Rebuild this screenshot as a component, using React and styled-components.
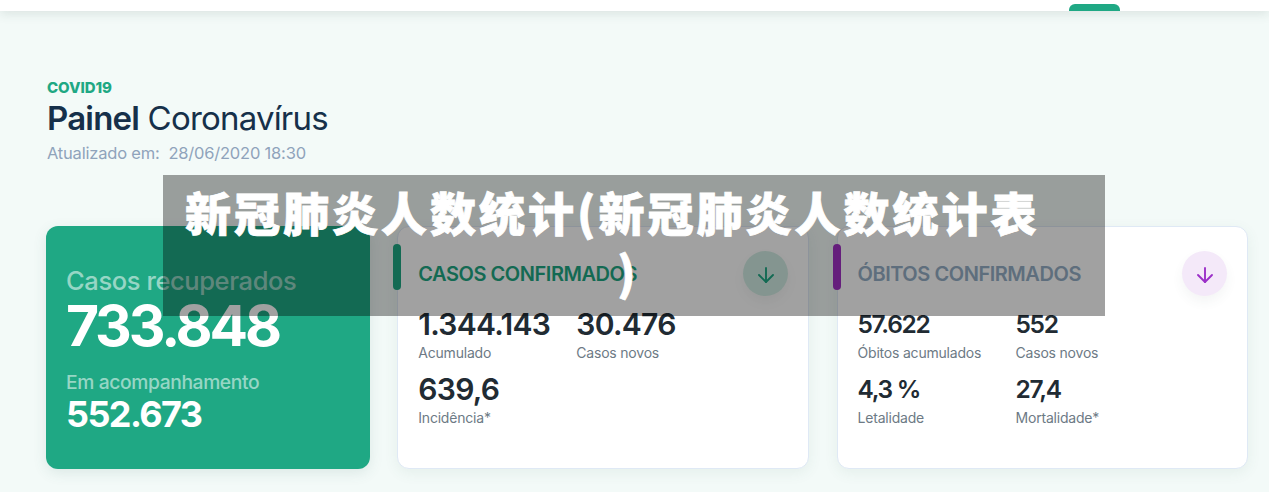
import React from "react";
import styled, { createGlobalStyle } from "styled-components";
import { ArrowDown } from "lucide-react";

const GlobalStyle = createGlobalStyle`
  html, body {
    margin: 0;
    padding: 0;
    height: 100%;
    overflow: hidden;
    background: #f3faf8;
    font-family: Inter, "Liberation Sans", sans-serif;
  }
  * { box-sizing: border-box; }
`;

const Page = styled.div`
  position: relative;
  width: 1269px;
  height: 492px;
  overflow: hidden;
`;

const TopBar = styled.header`
  height: 11px;
  background: #fff;
  display: flex;
  justify-content: flex-end;
  align-items: flex-end;
  padding-right: 149px;
  box-shadow: 0 2px 12px rgba(60, 90, 80, 0.16);
`;

const ActiveTab = styled.div`
  width: 51px;
  height: 7px;
  background: #1fa884;
  border-radius: 6px 6px 0 0;
`;

const Main = styled.main`
  padding: 69px 21px 0 46px;
`;

const Eyebrow = styled.div`
  font-size: 15px;
  line-height: 16px;
  font-weight: 800;
  color: #1fa884;
  padding-left: 1px;
  letter-spacing: -0.05px;
`;

const Heading = styled.h1`
  margin: 2px 0 0 1px;
  font-size: 33px;
  line-height: 40px;
  font-weight: 400;
  color: #16304a;
  letter-spacing: -0.8px;

  b {
    font-weight: 600;
  }
`;

const Updated = styled.div`
  margin: 4px 0 0 1px;
  font-size: 16.5px;
  line-height: 22px;
  color: #8fa3bb;
  letter-spacing: -0.2px;
`;

const Cards = styled.section`
  display: grid;
  grid-template-columns: 324px 412px 411.5px;
  gap: 27.25px;
  height: 243px;
  margin-top: 62px;
`;

const GreenCard = styled.article`
  background: #1fa884;
  border-radius: 12px;
  padding: 39px 20px 0;
  color: #fff;
  box-shadow: 0 4px 14px rgba(60, 110, 95, 0.12);
`;

const GreenLabel = styled.div`
  font-size: ${(p) => p.$size}px;
  line-height: ${(p) => p.$line}px;
  margin-top: ${(p) => p.$gap || 0}px;
  color: rgba(255, 255, 255, 0.55);
  font-weight: 500;
  letter-spacing: -0.4px;
`;

const GreenValue = styled.div`
  font-size: ${(p) => p.$size}px;
  line-height: ${(p) => p.$line}px;
  font-weight: 700;
  letter-spacing: ${(p) => p.$spacing}px;
`;

const Card = styled.article`
  position: relative;
  background: #fff;
  border: 1px solid #dfe9f5;
  border-radius: 12px;
  padding: 24px 20px 0;
  box-shadow: 0 4px 14px rgba(60, 110, 95, 0.08);
`;

const Accent = styled.span`
  position: absolute;
  left: -5px;
  top: 17px;
  width: 8px;
  height: 46px;
  border-radius: 4px;
  background: ${(p) => p.$color};
`;

const CardHead = styled.div`
  display: flex;
  justify-content: space-between;
  align-items: center;
  height: 45px;
`;

const CardTitle = styled.h2`
  margin: 0;
  font-size: 20px;
  font-weight: 600;
  letter-spacing: -0.45px;
  color: ${(p) => p.$color};
`;

const RoundButton = styled.button`
  width: 45px;
  height: 45px;
  border: 0;
  padding: 2px 0 0;
  border-radius: 50%;
  display: flex;
  align-items: center;
  justify-content: center;
  background: ${(p) => p.$bg};
  color: ${(p) => p.$color};
  box-shadow: 0 6px 12px rgba(60, 90, 80, 0.06);
`;

const Stats = styled.div`
  display: grid;
  grid-template-columns: 158px 1fr;
  row-gap: 7px;
  margin-top: 10px;
`;

const Value = styled.div`
  font-size: ${(p) => p.$size}px;
  line-height: 36px;
  font-weight: 600;
  color: #212b33;
  letter-spacing: ${(p) => p.$spacing}px;
`;

const Label = styled.div`
  font-size: 14px;
  line-height: 22px;
  color: #6d7a85;
  letter-spacing: -0.2px;
`;

const Banner = styled.div`
  position: absolute;
  left: 163px;
  top: 175px;
  width: 942px;
  height: 141px;
  padding: 6px 22px 0;
  background: rgba(0, 0, 0, 0.37);
  color: #fff;
  font-family: "Noto Sans CJK SC", sans-serif;
  font-size: 46px;
  line-height: 60px;
  font-weight: 900;
  letter-spacing: 3px;
  -webkit-text-stroke: 0.8px #fff;
`;

const BannerTail = styled.div`
  text-align: center;
  padding-right: 12px;
`;

const confirmed = [
  { value: "1.344.143", label: "Acumulado" },
  { value: "30.476", label: "Casos novos" },
  { value: "639,6", label: "Incidência*" },
];

const deaths = [
  { value: "57.622", label: "Óbitos acumulados" },
  { value: "552", label: "Casos novos" },
  { value: "4,3 %", label: "Letalidade" },
  { value: "27,4", label: "Mortalidade*" },
];

function StatCard({ title, titleColor, accent, buttonBg, buttonColor, size, spacing, items }) {
  return (
    <Card>
      <Accent $color={accent} />
      <CardHead>
        <CardTitle $color={titleColor}>{title}</CardTitle>
        <RoundButton $bg={buttonBg} $color={buttonColor}>
          <ArrowDown size={24} strokeWidth={1.9} />
        </RoundButton>
      </CardHead>
      <Stats>
        {items.map((item) => (
          <div key={item.label}>
            <Value $size={size} $spacing={spacing}>{item.value}</Value>
            <Label>{item.label}</Label>
          </div>
        ))}
      </Stats>
    </Card>
  );
}

export default function App() {
  return (
    <Page>
      <GlobalStyle />
      <TopBar>
        <ActiveTab />
      </TopBar>
      <Main>
        <Eyebrow>COVID19</Eyebrow>
        <Heading>
          <b>Painel</b> Coronavírus
        </Heading>
        <Updated>Atualizado em: &nbsp;28/06/2020 18:30</Updated>
        <Cards>
          <GreenCard>
            <GreenLabel $size={25.5} $line={32}>Casos recuperados</GreenLabel>
            <GreenValue $size={57} $line={58} $spacing={-3.1}>733.848</GreenValue>
            <GreenLabel $size={19.3} $line={24} $gap={15}>Em acompanhamento</GreenLabel>
            <GreenValue $size={36} $line={40} $spacing={-1.6}>552.673</GreenValue>
          </GreenCard>
          <StatCard
            title="CASOS CONFIRMADOS"
            titleColor="#1fa884"
            accent="#1fa884"
            buttonBg="#d2ede4"
            buttonColor="#1fa884"
            size={30}
            spacing={-0.7}
            items={confirmed}
          />
          <StatCard
            title="ÓBITOS CONFIRMADOS"
            titleColor="#96afc6"
            accent="#a030c5"
            buttonBg="#f4e9f9"
            buttonColor="#9b30c8"
            size={24.5}
            spacing={-1.3}
            items={deaths}
          />
        </Cards>
      </Main>
      <Banner>
        <div>新冠肺炎人数统计(新冠肺炎人数统计表</div>
        <BannerTail>)</BannerTail>
      </Banner>
    </Page>
  );
}
